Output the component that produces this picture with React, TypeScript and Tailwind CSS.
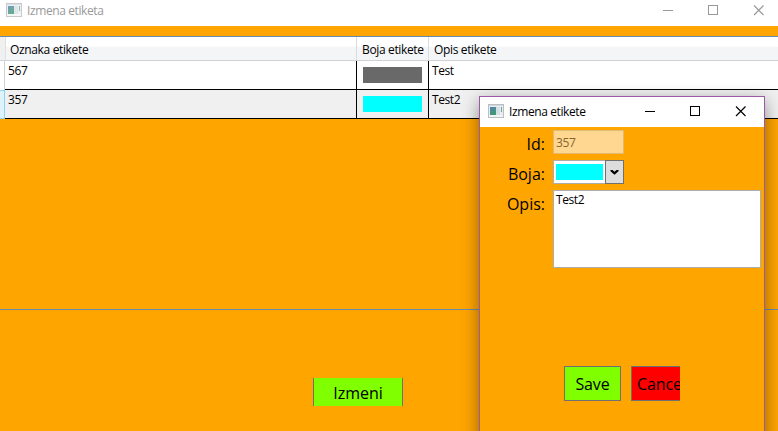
import type { ReactNode } from 'react';

function AppIcon({ faded = false }: { faded?: boolean }) {
  return (
    <svg width="16" height="14" viewBox="0 0 16 14" className={faded ? 'opacity-80' : ''} shapeRendering="crispEdges">
      <defs>
        <linearGradient id="pane" x1="0" y1="0" x2="0.6" y2="1">
          <stop offset="0" stopColor="#5580b3" />
          <stop offset="1" stopColor="#3f9a70" />
        </linearGradient>
      </defs>
      <rect x="0.5" y="0.5" width="15" height="13" fill="#e9edf0" stroke="#b9bec5" />
      <rect x="1" y="1" width="14" height="1" fill="#d5d9de" />
      <rect x="2" y="3" width="6" height="8" fill="url(#pane)" />
      <rect x="8" y="3" width="4" height="8" fill="#d6e0e4" />
      <rect x="13" y="3" width="1" height="5" fill="#6fae93" />
      <rect x="1" y="11" width="14" height="2" fill="#f3f4f5" />
    </svg>
  );
}

function WindowButtons({ className }: { className: string }) {
  return (
    <svg width="101" height="11" viewBox="0 0 101 11" className={className} fill="none" stroke="currentColor">
      <path d="M0 5.5H10" shapeRendering="crispEdges" />
      <rect x="45.5" y="0.5" width="9" height="9" shapeRendering="crispEdges" />
      <path d="M91 0.5L100.5 10M100.5 0.5L91 10" strokeWidth="1.15" />
    </svg>
  );
}

function Row({ id, color, text, selected = false }: { id: string; color: string; text: string; selected?: boolean }) {
  return (
    <div className={`flex h-[29px] ${selected ? 'bg-[#f0f0f0]' : 'bg-white'}`}>
      <div className={`w-[5px] shrink-0 border-r ${selected ? 'border-y border-[#8bd4f5] bg-[#dff3fc]' : 'border-[#d0d2d4] bg-white'}`} />
      <div className="w-[352px] shrink-0 border-r border-b border-black pl-[3px] leading-[20px] tracking-[-0.35px]">{id}</div>
      <div className="flex w-[72px] shrink-0 border-r border-b border-black pt-[6px] pl-[6px]">
        <div className={`h-[16px] w-[59px] ${color}`} />
      </div>
      <div className="grow border-b border-black pl-[3px] leading-[20px] tracking-[-0.4px]">{text}</div>
    </div>
  );
}

function Label({ children }: { children: ReactNode }) {
  return <div className="w-[65px] shrink-0 text-right text-[16px] leading-[28px] tracking-[0px]">{children}</div>;
}

function Dialog() {
  return (
    <div className="absolute top-[96px] left-[479px] h-[350px] w-[286px] border border-[#9b59a6] bg-[#ffa500] shadow-[0_5px_16px_0px_rgba(0,0,0,0.42)]">
      <div className="flex h-[30px] bg-white pt-[7px] pl-[8px]">
        <AppIcon />
        <span className="ml-[5px] w-[136px] text-[12px] leading-[16px] tracking-[-0.4px]">Izmena etikete</span>
        <WindowButtons className="mt-[2px] text-black" />
      </div>
      <div className="flex h-[30px] pt-[3px]">
        <Label>Id:</Label>
        <div className="ml-[8px] h-[24px] w-[71px] border border-[#e3b871] bg-[#ffd790] pl-[2px] leading-[23px] tracking-[-0.35px] text-[#836633]">357</div>
      </div>
      <div className="flex h-[30px] pt-[3px]">
        <Label>Boja:</Label>
        <div className="ml-[8px] flex h-[24px] w-[71px] border border-[#acacac] bg-white">
          <div className="mt-[3px] ml-[2px] h-[16px] w-[47px] bg-[#00ffff]" />
          <div className="-my-px -mr-px ml-auto flex w-[19px] items-center justify-center border border-[#707070] bg-[#dddddd]">
            <svg width="9" height="5" viewBox="0 0 9 5" fill="black">
              <path d="M0.5 0H2.5L4.5 1.8L6.5 0H8.5V1.2L4.5 4.8L0.5 1.2Z" />
            </svg>
          </div>
        </div>
      </div>
      <div className="flex h-[176px] pt-[3px]">
        <Label>Opis:</Label>
        <div className="ml-[8px] h-[78px] w-[208px] border border-[#abadb3] bg-white pl-[2px] leading-[18px] tracking-[-0.4px]">Test2</div>
      </div>
      <div className="flex h-[35px] pt-[3px] pl-[84px]">
        <button className="h-[35px] w-[57px] shrink-0 border border-[#707070] bg-[#7fff00] text-[16px] tracking-[-0.1px]">Save</button>
        <div className="ml-[10px] h-[35px] w-[49px] shrink-0 overflow-hidden">
          <button className="h-[35px] w-[61px] border border-[#707070] bg-[#ff0000] pl-[5px] text-left text-[16px] tracking-[-0.1px]">Cancel</button>
        </div>
      </div>
    </div>
  );
}

export default function App() {
  return (
    <div className="relative h-[431px] w-[778px] overflow-hidden bg-[#ffa500] font-['Open_Sans',sans-serif] text-[12px] text-black">
      <div className="flex h-[26px] bg-white pt-[3px] pl-[6px]">
        <AppIcon faded />
        <span className="ml-[5px] w-[636px] leading-[16px] tracking-[-0.4px] text-[#999999]">Izmena etiketa</span>
        <WindowButtons className="mt-[2px] text-[#999999]" />
      </div>
      <div className="mt-[10px] h-[274px] border-y border-[#688caf]">
        <div className="flex h-[24px] border-b border-[#d0d2d4] bg-linear-to-b from-white from-40% to-[#f4f5f7] to-45% leading-[26px] tracking-[-0.35px]">
          <div className="w-[6px] shrink-0 border-r border-[#dfe0e2] bg-[#f0f0f0]" />
          <div className="w-[351px] shrink-0 border-r border-[#dadbdd] pl-[4px]">Oznaka etikete</div>
          <div className="w-[72px] shrink-0 border-r border-[#dadbdd] pl-[5px] whitespace-nowrap">Boja etikete</div>
          <div className="pl-[5px]">Opis etikete</div>
        </div>
        <Row id="567" color="bg-[#696969]" text="Test" />
        <Row id="357" color="bg-[#00ffff]" text="Test2" selected />
      </div>
      <div className="flex pt-[68px] pl-[313px]">
        <button className="h-[28px] w-[90px] border-x border-[#707070] bg-[#7fff00] text-[16px] leading-[30px]">Izmeni</button>
      </div>
      <Dialog />
    </div>
  );
}
